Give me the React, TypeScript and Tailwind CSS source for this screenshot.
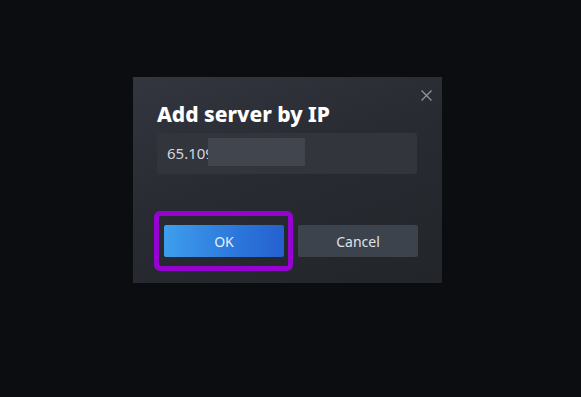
import React from "react";

export default function App() {
  return (
    <div
      className="w-[581px] h-[397px] bg-[#0c0d10] relative overflow-hidden"
      style={{ fontFamily: '"Noto Sans", "Open Sans", Arial, sans-serif' }}
    >
      <div className="absolute left-[133px] top-[77px] w-[309px] h-[206px] bg-[linear-gradient(160deg,#33363e_0%,#282b32_45%,#222529_100%)] flex flex-col px-[24px]">
        <button className="absolute right-[10px] top-[12px] w-[12px] h-[12px] flex items-center justify-center">
          <svg width="11" height="11" viewBox="0 0 11 11" fill="none" stroke="#8a929c" strokeWidth="1.4">
            <path d="M0.5 0.5 L10.5 10.5 M10.5 0.5 L0.5 10.5" />
          </svg>
        </button>
        <h1 className="mt-[22px] text-[21px] leading-[30px] font-extrabold text-white tracking-[0px]">
          Add server by IP
        </h1>
        <div className="mt-[4px] w-[260px] h-[41px] rounded-[3px] bg-[#32353c] relative flex items-center px-[10px]">
          <span className="text-[15px] text-[#d2d6dc]">65.109</span>
          <div className="absolute left-[51px] top-[5px] w-[97px] h-[28px] bg-[#41454d]" />
        </div>
        <div className="mt-[51px] flex gap-[14px] pl-[7px]">
          <div className="relative">
            <div className="absolute left-[-10px] top-[-14px] w-[139px] h-[60px] rounded-[6px] border-[5px] border-[#9603d0]" />
            <button className="w-[120px] h-[32px] rounded-[2px] bg-[linear-gradient(90deg,#3e9eed_0%,#2c77db_60%,#2560cf_100%)] text-[14px] text-[#e6effa] flex items-center justify-center">
              OK
            </button>
          </div>
          <button className="w-[120px] h-[32px] rounded-[2px] bg-[#3d434d] text-[14px] text-[#dfe3e8] flex items-center justify-center">
            Cancel
          </button>
        </div>
      </div>
    </div>
  );
}
